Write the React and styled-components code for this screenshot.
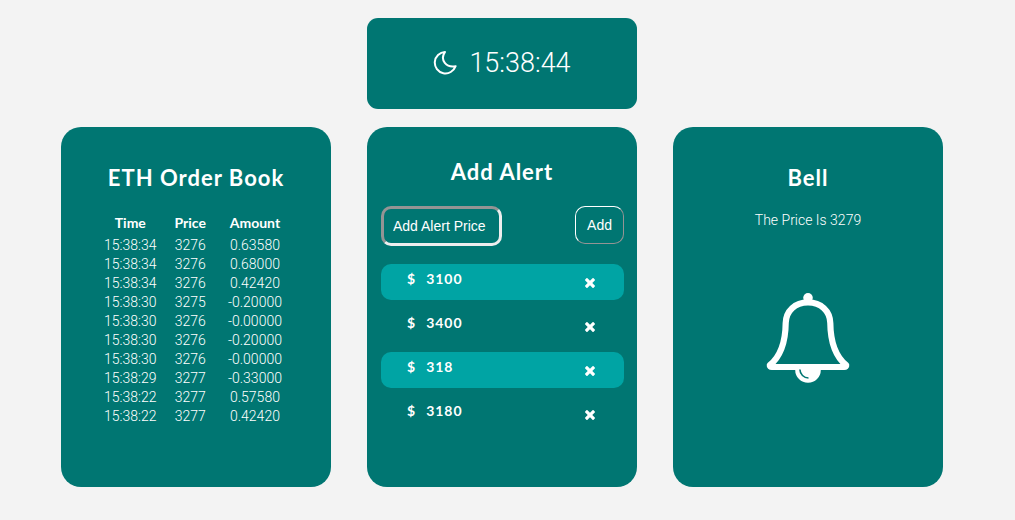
import React, { useState } from "react";
import styled, { createGlobalStyle } from "styled-components";

const TEAL = "#007672";
const LIGHT_FONT = 'Roboto, "Liberation Sans", sans-serif';

const GlobalStyle = createGlobalStyle`
  * { box-sizing: border-box; }
  body {
    margin: 0;
    background: #f3f3f3;
    color: #fff;
    font-family: Lato, "Liberation Sans", sans-serif;
  }
`;

const Page = styled.main`
  display: grid;
  grid-template-columns: repeat(3, minmax(0, 1fr));
  gap: 18px 36px;
  padding: 18px 72px 32px 61px;
`;

const ClockCard = styled.header`
  grid-column: 2;
  display: flex;
  align-items: center;
  justify-content: center;
  gap: 12px;
  padding: 28px 0 29px;
  border-radius: 11px;
  background: ${TEAL};
`;

const Time = styled.time`
  font: 300 27px/34px ${LIGHT_FONT};
`;

const Card = styled.section`
  grid-row: 2;
  display: flex;
  flex-direction: column;
  align-items: center;
  min-height: 360px;
  padding: ${({ $top }) => $top}px 0 24px;
  border-radius: 20px;
  background: ${TEAL};
`;

const Title = styled.h2`
  margin: 0;
  font-size: 22px;
  line-height: 30px;
  font-weight: 700;
  letter-spacing: 1px;
`;

const OrderTable = styled.table`
  margin-top: 20px;
  border-collapse: collapse;
  font: 300 14px/19px ${LIGHT_FONT};
  text-align: center;

  th, td { padding: 0 9px; }
  th:last-child, td:last-child { padding: 0 15px 0 13px; }
  thead th, thead th:last-child {
    padding-bottom: 4px;
    font-family: Lato, "Liberation Sans", sans-serif;
    font-weight: 700;
  }
`;

const AlertForm = styled.form`
  display: flex;
  align-items: flex-start;
  justify-content: space-between;
  align-self: stretch;
  margin: 19px 13px 0 14px;
`;

const PriceInput = styled.input`
  width: 121px;
  height: 40px;
  padding: 0 9px;
  border: 3px solid;
  border-color: #949494 #eee #eee #949494;
  border-radius: 10px;
  background: transparent;
  color: #fff;
  font: 14px "Liberation Sans", Arial, sans-serif;

  &::placeholder { color: #fff; opacity: 1; }
`;

const AddButton = styled.button`
  height: 38px;
  padding: 0 11px;
  border: 1px solid;
  border-color: #fff #949494 #949494 #fff;
  border-radius: 10px;
  background: transparent;
  color: #fff;
  font: 14px "Liberation Sans", Arial, sans-serif;
`;

const AlertList = styled.ul`
  display: flex;
  flex-direction: column;
  align-self: stretch;
  gap: 8px;
  margin: 18px 13px 0 14px;
  padding: 0;
  list-style: none;
`;

const AlertRow = styled.li`
  display: flex;
  justify-content: space-between;
  height: 36px;
  padding: 0 26px;
  border-radius: 10px;

  &:nth-child(odd) { background: #00a4a4; }
`;

const AlertPrice = styled.span`
  display: flex;
  gap: 10px;
  font-size: 14px;
  line-height: 30px;
  font-weight: 700;
  letter-spacing: 1px;
`;

const RemoveButton = styled.button`
  display: flex;
  align-items: center;
  padding: 2px 3px 0;
  border: 0;
  background: transparent;
  color: #fff;
`;

const PriceNote = styled.p`
  margin: 17px 0 0;
  font: 300 14px/20px ${LIGHT_FONT};
`;

const BellArt = styled.svg`
  margin-top: 62px;
`;

const orders = [
  ["15:38:34", "3276", "0.63580"],
  ["15:38:34", "3276", "0.68000"],
  ["15:38:34", "3276", "0.42420"],
  ["15:38:30", "3275", "-0.20000"],
  ["15:38:30", "3276", "-0.00000"],
  ["15:38:30", "3276", "-0.20000"],
  ["15:38:30", "3276", "-0.00000"],
  ["15:38:29", "3277", "-0.33000"],
  ["15:38:22", "3277", "0.57580"],
  ["15:38:22", "3277", "0.42420"],
];

function Moon() {
  return (
    <svg width="24" height="24" viewBox="0 0 24 24" fill="none" stroke="#fff" strokeWidth="2" strokeLinejoin="round" aria-hidden="true">
      <path d="M12 1A10.7 10.7 0 1 0 22.6 15.2C13.5 17 6.4 9.2 12 1Z" />
    </svg>
  );
}

function Cross() {
  return (
    <svg width="10" height="10" viewBox="302 366 1188 1188" fill="currentColor" aria-hidden="true">
      <path d="M1490 1322q0 40-28 68l-136 136q-28 28-68 28t-68-28l-294-294-294 294q-28 28-68 28t-68-28l-136-136q-28-28-28-68t28-68l294-294-294-294q-28-28-28-68t28-68l136-136q28-28 68-28t68 28l294 294 294-294q28-28 68-28t68 28l136 136q28 28 28 68t-28 68l-294 294 294 294q28 28 28 68z" />
    </svg>
  );
}

function Bell() {
  return (
    <BellArt width="84" height="92" viewBox="0 0 84 92" role="img" aria-label="Bell">
      <circle cx="42" cy="5.8" r="4.8" fill="#fff" />
      <path
        d="M42 10.4C29 10.4 20 19 19.7 31C19.5 50 15 64 3.8 73.2Q3.6 75 5.8 75H78.2Q80.4 75 80.2 73.2C69 64 64.5 50 64.3 31C64 19 55 10.4 42 10.4Z"
        fill="none"
        stroke="#fff"
        strokeWidth="6.2"
        strokeLinejoin="round"
      />
      <path d="M29.2 77H54.8V78A12.8 12.8 0 0 1 29.2 78Z" fill="#fff" />
      <path d="M33.9 77.6A8.6 8.6 0 0 0 42.5 86" fill="none" stroke={TEAL} strokeWidth="1.6" />
    </BellArt>
  );
}

export default function App() {
  const [alerts, setAlerts] = useState(["3100", "3400", "318", "3180"]);
  const [price, setPrice] = useState("");

  const addAlert = (event) => {
    event.preventDefault();
    if (price) setAlerts([...alerts, price]);
    setPrice("");
  };

  return (
    <>
      <GlobalStyle />
      <Page>
        <ClockCard>
          <Moon />
          <Time>15:38:44</Time>
        </ClockCard>

        <Card $top={36}>
          <Title>ETH Order Book</Title>
          <OrderTable>
            <thead>
              <tr>
                <th scope="col">Time</th>
                <th scope="col">Price</th>
                <th scope="col">Amount</th>
              </tr>
            </thead>
            <tbody>
              {orders.map(([time, value, amount], i) => (
                <tr key={i}>
                  <td>{time}</td>
                  <td>{value}</td>
                  <td>{amount}</td>
                </tr>
              ))}
            </tbody>
          </OrderTable>
        </Card>

        <Card $top={30}>
          <Title>Add Alert</Title>
          <AlertForm onSubmit={addAlert}>
            <PriceInput
              aria-label="Add Alert Price"
              placeholder="Add Alert Price"
              value={price}
              onChange={(event) => setPrice(event.target.value)}
            />
            <AddButton type="submit">Add</AddButton>
          </AlertForm>
          <AlertList>
            {alerts.map((alert, i) => (
              <AlertRow key={i}>
                <AlertPrice>
                  <span>$</span>
                  <span>{alert}</span>
                </AlertPrice>
                <RemoveButton
                  type="button"
                  aria-label={`Remove ${alert}`}
                  onClick={() => setAlerts(alerts.filter((_, n) => n !== i))}
                >
                  <Cross />
                </RemoveButton>
              </AlertRow>
            ))}
          </AlertList>
        </Card>

        <Card $top={36}>
          <Title>Bell</Title>
          <PriceNote>The Price Is 3279</PriceNote>
          <Bell />
        </Card>
      </Page>
    </>
  );
}
